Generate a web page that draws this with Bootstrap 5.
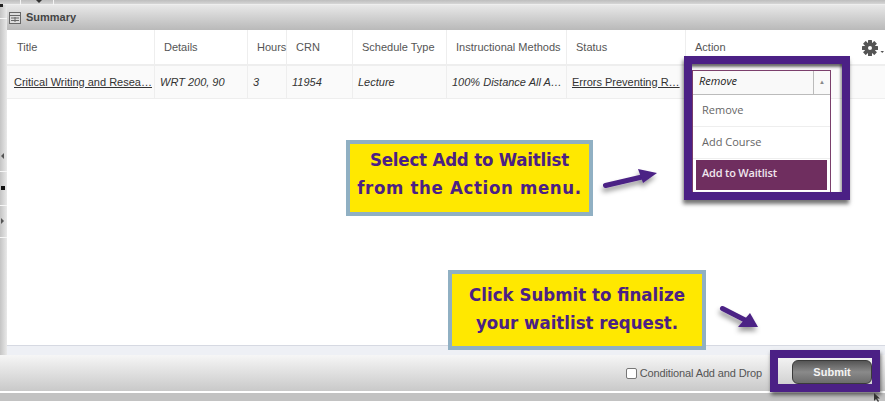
<!DOCTYPE html>
<html lang="en">
<head>
<meta charset="utf-8">
<title>Summary</title>
<link rel="stylesheet" href="https://cdn.jsdelivr.net/npm/bootstrap@5.3.0/dist/css/bootstrap.min.css">
<style>
html,body{margin:0;background:#fff;overflow:hidden}
body{font-family:"Liberation Sans",Arial,sans-serif;font-size:11px;color:#555}
.shot{position:relative;width:890px;height:404px;overflow:hidden}
.app{width:885px;height:401px}
.topstrip{height:5px;background:linear-gradient(#bdbdbd,#d6d6d6);border-bottom:1px solid #eee;position:relative}
.topmark{position:absolute;left:36px;top:0;width:0;height:0;border:3px solid transparent;border-top:3px solid #333}
.topmark2{position:absolute;left:0;top:4px;width:3px;height:3px;background:#222;z-index:2}
.tabline{position:absolute;top:0;height:5px;width:1px;background:#f4f4f4}
.rail{width:7px;background:linear-gradient(90deg,#c4c4c4,#e9e9e9);position:relative}
.notch{position:absolute;left:0;width:7px;height:1px;background:#f6f6f6}
.railarrow{position:absolute;left:1px;width:0;height:0;border:3.5px solid transparent}
.raildot{position:absolute;left:1px;width:4px;height:4px;background:#111}
.panelhead{height:25px;background:linear-gradient(#e8e8e8,#b9b9b9);color:#444;font-weight:700;font-size:11px;padding-left:2px}
.panelhead svg{margin-right:1px}
.grid-table{table-layout:fixed;width:878px;margin:0;border-collapse:separate;border-spacing:0}
.grid-table th,.grid-table td{padding:0;border:0;background:transparent;color:#555;box-shadow:none;white-space:nowrap;vertical-align:middle}
.grid-table th{height:36px;font-weight:400;border-right:1px solid #eee;border-bottom:2px solid #eee}
.grid-table td{height:33px;background:#fafafa;border-right:1px solid #eee;border-bottom:1px solid #eee;font-style:italic;color:#333}
.grid-table a{color:#333;font-style:normal}
.c1{width:148px}.c2{width:93px}.c3{width:39px}.c4{width:66px}.c5{width:94px}.c6{width:120px}.c7{width:119px}
.ind-a{padding-left:10px!important}.ind-b{padding-left:9px!important}
.ind-d{padding-left:7px!important}.ind-e{padding-left:5px!important}
.gearwrap{position:absolute;left:861px;top:40px;line-height:0}
.stripband{height:10px;background:#eef0f5;border-top:1px solid #d6d9e2}
.toolbar{height:36px;background:linear-gradient(#f6f6f6,#c9c9c9);padding-right:123px;color:#555}
.toolbar .form-check-input{width:11px;height:11px;margin:0 3px 0 0;border-color:#777;border-radius:2px;float:none}
.toolbar label{letter-spacing:-.13px}
.botline{height:2px;background:#fff}
.botbar{height:8px;background:#c2c2c2}
.combo{position:absolute;left:692px;top:70px;width:139px;height:122px;background:#fff;border:1px solid #7b3f6c;border-bottom:0;font-family:"Open Sans",sans-serif;font-size:11px;color:#666}
.combohead{height:24px;background:#f9f9f9;border-bottom:1px solid #bbb;color:#222;font-style:italic}
.comboval{padding-left:6px;padding-bottom:2px}
.combobtn{width:17px;border-left:1px solid #bbb;color:#888;font-size:6px;font-style:normal}
.comboitem{height:32px;padding-left:9px;border-bottom:1px solid #eee;background:#fff;color:#666;font-size:11px}
.comboactive{height:30px;margin:1px 3px 0;padding-left:6px;padding-bottom:3px;background:#6f2e5f;color:#f0e6ee;font-weight:600;font-size:11px;letter-spacing:-.2px}
.frame{position:absolute;border:8px solid #4b2085;box-shadow:-1px 4px 4px rgba(0,0,0,.55),inset 0 5px 3px -2px rgba(0,0,0,.55),inset -3px 0 2px -1px rgba(0,0,0,.3);pointer-events:none}
.frame-a{left:684px;top:56px;width:166px;height:144px}
.frame-b{left:770px;top:350px;width:110px;height:42px;box-shadow:1px 3px 4px rgba(0,0,0,.55)}
.callout{position:absolute;border:4px solid #90b0c3;background:#ffe800;color:#4b2085;font-family:"DejaVu Sans",sans-serif;font-stretch:condensed;font-weight:700;font-size:18.5px;line-height:28px;text-align:center}
.call-a{left:346px;top:140px;width:247px;height:76px;padding-bottom:9px}
.call-b{left:448px;top:270px;width:258px;height:80px;padding-bottom:2px}
.line-tight{letter-spacing:-.2px}
.line-wide{letter-spacing:.65px}
.subbtn{position:absolute;left:792px;top:360px;width:80px;height:24px;padding:0;border:1px solid #3a3a3a;border-radius:6px;background:linear-gradient(#555,#8a8a8a 50%,#6c6c6c);color:#f4f4f4;font-size:11px;font-weight:700;line-height:22px}
.over{position:absolute;overflow:visible}
</style>
</head>
<body>
<div class="shot">
  <div class="app d-flex flex-column">
    <div class="topstrip">
      <span class="topmark"></span><span class="topmark2"></span>
      <span class="tabline" style="left:20px"></span><span class="tabline" style="left:53px"></span>
    </div>
    <div class="d-flex flex-grow-1">
      <div class="rail">
        <span class="notch" style="top:13px"></span>
        <span class="railarrow" style="top:148px;left:-2px;border-right-color:#555"></span>
        <span class="notch" style="top:166px"></span>
        <span class="raildot" style="top:181px"></span>
        <span class="notch" style="top:200px"></span>
        <span class="railarrow" style="top:213px;left:1px;border-left-color:#555"></span>
        <span class="notch" style="top:232px"></span>
      </div>
      <div class="flex-grow-1 d-flex flex-column">
        <div class="panelhead d-flex align-items-center gap-1">
          <svg width="12" height="12" viewBox="0 0 12 12" fill="none" stroke="#666" stroke-width="1"><rect x=".5" y=".5" width="11" height="11" fill="#dcdcdc"/><path d="M.5 3.500h11M2 6h8M2 8.500h8M6 5v5"/></svg>
          <span>Summary</span>
        </div>
        <table class="table grid-table">
          <colgroup><col class="c1"><col class="c2"><col class="c3"><col class="c4"><col class="c5"><col class="c6"><col class="c7"><col></colgroup>
          <thead>
            <tr>
              <th class="ind-a">Title</th><th class="ind-b">Details</th><th class="ind-b">Hours</th><th class="ind-b">CRN</th><th class="ind-b">Schedule Type</th><th class="ind-b">Instructional Methods</th><th class="ind-b">Status</th><th class="ind-b border-end-0">Action</th>
            </tr>
          </thead>
          <tbody>
            <tr>
              <td class="ind-d"><a href="#">Critical Writing and Resea…</a></td>
              <td class="ind-e">WRT 200, 90</td>
              <td class="ind-e">3</td>
              <td class="ind-e">11954</td>
              <td class="ind-e">Lecture</td>
              <td class="ind-e">100% Distance All A…</td>
              <td class="ind-e"><a href="#">Errors Preventing R…</a></td>
              <td class="border-end-0"></td>
            </tr>
          </tbody>
        </table>
        <div class="flex-grow-1 bg-white"></div>
        <div class="stripband"></div>
      </div>
    </div>
    <div class="toolbar d-flex align-items-center justify-content-end">
      <input class="form-check-input" type="checkbox" id="cad">
      <label for="cad">Conditional Add and Drop</label>
    </div>
    <div class="botline"></div>
    <div class="botbar"></div>
  </div>

  <div class="gearwrap">
    <svg width="24" height="18" viewBox="0 0 24 18"><g fill="#555"><rect x="7" y="0" width="4" height="16" rx=".5"/><rect x="1" y="6" width="16" height="4" rx=".5"/><rect x="7" y="0" width="4" height="16" rx=".5" transform="rotate(45 9 8)"/><rect x="7" y="0" width="4" height="16" rx=".5" transform="rotate(-45 9 8)"/><circle cx="9" cy="8" r="5.500"/><path d="M19.500 11h3.500l-1.750 2z"/></g><circle cx="9" cy="8" r="2" fill="#fff"/></svg>
  </div>

  <div class="combo">
    <div class="combohead d-flex align-items-stretch">
      <span class="comboval flex-grow-1 d-flex align-items-center">Remove</span>
      <span class="combobtn d-flex align-items-center justify-content-center">&#9650;</span>
    </div>
    <div class="comboitem d-flex align-items-center">Remove</div>
    <div class="comboitem d-flex align-items-center">Add Course</div>
    <div class="comboactive d-flex align-items-center">Add to Waitlist</div>
  </div>
  <div class="frame frame-a"></div>

  <div class="callout call-a d-flex flex-column justify-content-center"><div class="line-tight">Select Add to Waitlist</div><div class="line-wide">from the Action menu.</div></div>
  <svg class="over" style="left:595px;top:160px" width="70" height="40" viewBox="0 0 70 40"><defs><filter id="sh" x="-30%" y="-50%" width="160%" height="220%"><feDropShadow dx="-1" dy="4" stdDeviation="2.500" flood-color="#000" flood-opacity=".4"/></filter></defs><g filter="url(#sh)"><path d="M10.500 25.500 47 17" stroke="#4b2085" stroke-width="5" stroke-linecap="round"/><path fill="#4b2085" d="M43 9l19 4-14 10z"/></g></svg>

  <div class="callout call-b d-flex flex-column justify-content-center"><div>Click Submit to finalize</div><div>your waitlist request.</div></div>
  <svg class="over" style="left:712px;top:298px" width="56" height="40" viewBox="0 0 56 40"><g filter="url(#sh)"><path d="M10.500 10.500 33 22" stroke="#4b2085" stroke-width="5" stroke-linecap="round"/><path fill="#4b2085" d="M38 15l8 14-20 0z"/></g></svg>

  <div class="frame frame-b"></div>
  <button type="button" class="btn subbtn">Submit</button>
  <svg class="over" style="left:874px;top:393px" width="8" height="10" viewBox="0 0 8 10"><path fill="#333" d="M0 0v8l2-2 2 3 1-1-2-2.500h3z"/></svg>
</div>
<script src="https://cdn.jsdelivr.net/npm/bootstrap@5.3.0/dist/js/bootstrap.bundle.min.js"></script>
</body>
</html>
